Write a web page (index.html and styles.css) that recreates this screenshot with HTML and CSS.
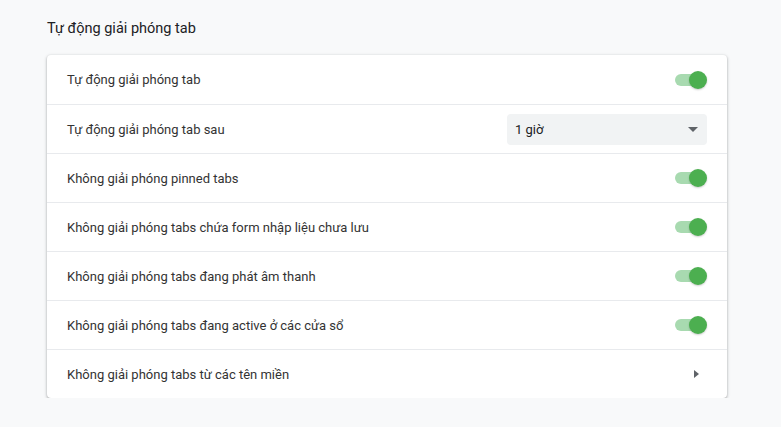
FILE: index.html
```html
<!DOCTYPE html>
<html lang="vi">
<head>
<meta charset="utf-8">
<link rel="stylesheet" href="styles.css">
</head>
<body>
<div class="page">
  <h2 class="section-title">Tự động giải phóng tab</h2>
  <div class="card">
    <div class="row">
      <span class="label">Tự động giải phóng tab</span>
      <span class="toggle"><span class="knob"></span></span>
    </div>
    <div class="row">
      <span class="label">Tự động giải phóng tab sau</span>
      <div class="select">
        <span>1 giờ</span>
        <svg class="caret" width="10" height="5" viewBox="0 0 10 5"><path d="M0 0 L10 0 L5 5 Z" fill="#5f6368"/></svg>
      </div>
    </div>
    <div class="row">
      <span class="label">Không giải phóng pinned tabs</span>
      <span class="toggle"><span class="knob"></span></span>
    </div>
    <div class="row">
      <span class="label">Không giải phóng tabs chứa form nhập liệu chưa lưu</span>
      <span class="toggle"><span class="knob"></span></span>
    </div>
    <div class="row">
      <span class="label">Không giải phóng tabs đang phát âm thanh</span>
      <span class="toggle"><span class="knob"></span></span>
    </div>
    <div class="row">
      <span class="label">Không giải phóng tabs đang active ở các cửa sổ</span>
      <span class="toggle"><span class="knob"></span></span>
    </div>
    <div class="row">
      <span class="label">Không giải phóng tabs từ các tên miền</span>
      <svg class="arrow" width="5" height="8" viewBox="0 0 5 8"><path d="M0 0 L5 4 L0 8 Z" fill="#5f6368"/></svg>
    </div>
  </div>
</div>
</body>
</html>
```
FILE: styles.css
```css
html, body {
  margin: 0;
  padding: 0;
  background: #f8f9fa;
}
body {
  font-family: Roboto, "Noto Sans", "Liberation Sans", sans-serif;
  color: #202124;
}
.page {
  padding: 19px 54px 0 47px;
}
.section-title {
  margin: 0 0 16px 0;
  font-size: 14.5px;
  font-weight: 400;
  line-height: 20px;
  color: #202124;
}
.card {
  background: #fff;
  border-radius: 4px;
  box-shadow: 0 1px 2px rgba(60,64,67,0.3), 0 1px 3px 1px rgba(60,64,67,0.15);
}
.row {
  display: flex;
  align-items: center;
  justify-content: space-between;
  height: 48px;
  padding: 0 20px;
  border-top: 1px solid #e8eaed;
}
.row:first-child {
  border-top: none;
  height: 49px;
}
.label {
  font-size: 13px;
  color: #333;
}
.toggle {
  position: relative;
  width: 30px;
  height: 12px;
  margin-right: 2px;
  border-radius: 6px;
  background: #a8dab0;
}
.knob {
  position: absolute;
  right: -2px;
  top: -3px;
  width: 18px;
  height: 18px;
  border-radius: 50%;
  background: #4caf50;
  box-shadow: 0 1px 2px rgba(0,0,0,0.2);
}
.select {
  display: flex;
  align-items: center;
  justify-content: space-between;
  width: 200px;
  height: 31px;
  box-sizing: border-box;
  padding: 0 9px 0 8px;
  background: #f1f3f4;
  border-radius: 4px;
  font-size: 13px;
  color: #202124;
}
.arrow {
  margin-right: 8px;
}
```
